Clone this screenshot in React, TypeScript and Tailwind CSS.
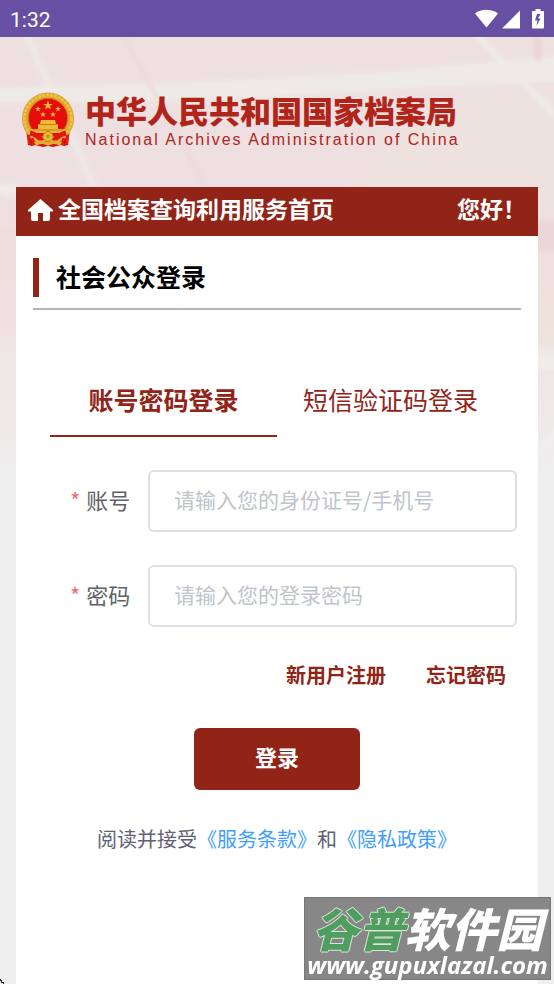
import { useState } from "react";

const tabs = ["账号密码登录", "短信验证码登录"];

const fields = [
  { id: "account", label: "账号", type: "text", placeholder: "请输入您的身份证号/手机号" },
  { id: "password", label: "密码", type: "password", placeholder: "请输入您的登录密码" },
];

function StatusBar() {
  return (
    <div className="flex h-[37px] items-center justify-between bg-[#674fa3] px-[10px] text-white">
      <span className="pt-[2px] font-[Roboto,sans-serif] text-[21px] leading-8">1:32</span>
      <svg width="70" height="20" viewBox="0 0 70 20" fill="currentColor" aria-hidden="true">
        <path d="M1 4.500C7 -.5 17.500 -.5 24 4.500L12.500 18.500Z" />
        <path d="M46 1.500V19.500H28Z" />
        <path
          fillRule="evenodd"
          d="M61.500 0h5v2h2.500a1 1 0 0 1 1 1v15.500a1 1 0 0 1-1 1H59a1 1 0 0 1-1-1V3a1 1 0 0 1 1-1h2.500zM63 5l-2 6.500h2.500L62.500 17l4-7.500H64l2.500-4.500z"
        />
      </svg>
    </div>
  );
}

/* Faded marble-like artwork behind the header */
function Backdrop() {
  return (
    <svg
      className="absolute inset-x-0 top-0 h-[480px] w-full"
      viewBox="0 0 554 480"
      preserveAspectRatio="none"
      aria-hidden="true"
    >
      <defs>
        <linearGradient id="fade" x1="0" y1="0" x2="0" y2="1">
          <stop offset="0.5" stopColor="#efefef" stopOpacity="0" />
          <stop offset="0.95" stopColor="#efefef" />
        </linearGradient>
        <filter id="soft" x="-10%" y="-10%" width="120%" height="120%">
          <feGaussianBlur stdDeviation="2" />
        </filter>
      </defs>
      <rect width="554" height="480" fill="#eee0e1" />
      <g filter="url(#soft)">
        <path d="M440 66L564 50V160L330 170Z" fill="#eee2de" />
        <path d="M-10 51L180 46L380 35L564 18V44L400 52L200 64L-10 66Z" fill="#eeebe6" />
        <path d="M26 -4L94 150" stroke="#efe9e7" strokeWidth="6" />
        <path d="M122 -4L206 150" stroke="#ebdada" strokeWidth="4" />
        <path d="M472 -6L564 86" stroke="#f0ebe8" strokeWidth="6" />
        <path d="M538 -4V24" stroke="#ead5d5" strokeWidth="7" />
        <path d="M-4 144L20 150V162L-4 156Z" fill="#f0eae8" />
        <path d="M-4 190H20V300H-4Z" fill="#f0dedd" />
        <path d="M536 184H560V214H536Z" fill="#ecd6d7" />
        <path d="M536 250H560V310H536Z" fill="#eedfd8" />
        <path d="M536 315H560V332H536Z" fill="#efebe5" />
        <path d="M536 337H560V365H536Z" fill="#efdddd" />
        <path d="M534 420L560 390" stroke="#f0eeee" strokeWidth="5" />
      </g>
      <rect width="554" height="480" fill="url(#fade)" />
    </svg>
  );
}

function Emblem() {
  const star = "M0-5L1.200-1.600H4.800L1.900.6L3 4L0 1.900L-3 4L-1.900.6L-4.800-1.600H-1.200Z";
  return (
    <svg width="54" height="56" viewBox="0 0 54 56" className="shrink-0" role="img" aria-label="国徽">
      <path d="M5 37L7 53l4 1 3-1 4 1 4 1 5-1 5 1 4-1 4-1 3 1 4-1L49 37Z" fill="#d3110e" />
      <circle cx="27" cy="26.500" r="26" fill="#dca42a" />
      <circle cx="27" cy="26.500" r="23.500" fill="none" stroke="#edc148" strokeWidth="3" strokeDasharray="3 1" />
      <circle cx="27" cy="26" r="19.500" fill="#e60c0b" stroke="#b77a12" strokeWidth="0.500" />
      <g fill="#f0b937">
        <path d={star} transform="translate(27 13.500)" />
        <path d={star} transform="translate(17 17) scale(.62)" />
        <path d={star} transform="translate(37 17) scale(.62)" />
        <path d={star} transform="translate(22 22.500) scale(.62)" />
        <path d={star} transform="translate(32 22.500) scale(.62)" />
        <path d="M20 28H34L35 32H37V37H45L42 41H12L9 37H17V32H19Z" />
      </g>
      <path d="M18 32.500H36M12 38H42" stroke="#c77c16" strokeWidth="1" />
      <path d="M9 41Q17 43 21 49M45 41Q37 43 33 49" stroke="#e11612" strokeWidth="5" fill="none" />
      <circle cx="27" cy="44.500" r="5" fill="#edbd3b" stroke="#b77a12" strokeWidth="1" />
      <circle cx="27" cy="44.500" r="2" fill="#cf921e" />
      <path d="M13 50Q20 46 27 51Q34 46 41 50L39 54Q33 50 27 54Q21 50 15 54Z" fill="#e2ae31" />
      <path d="M8 43V52M12 46V53M42 46V53M46 43V52" stroke="#e51b16" strokeWidth="2" />
    </svg>
  );
}

function Watermark() {
  return (
    <div className="fixed right-[3px] bottom-1 flex h-[83px] w-[247px] flex-col items-center border border-[#777] bg-[#878787] whitespace-nowrap text-white">
      <div className="pt-1 text-[46px] leading-[50px] font-black italic">
        <span className="text-[#4f9e60] [text-shadow:1px_0_#d8e5d8,-1px_0_#d8e5d8,0_1px_#d8e5d8,0_-1px_#d8e5d8]">
          谷普
        </span>
        软件园
      </div>
      <div className="font-['Open_Sans',sans-serif] text-[24px] leading-[26px] font-bold italic">
        www.gupuxlazal.com
      </div>
    </div>
  );
}

export default function App() {
  const [activeTab, setActiveTab] = useState(0);

  return (
    <div className="flex min-h-screen flex-col bg-[#efefef] font-['Noto_Sans_CJK_SC',sans-serif]">
      <StatusBar />

      <div className="relative flex flex-1 flex-col">
        <Backdrop />

        {/* ===== HEADER ===== */}
        <header className="relative flex h-[150px] items-center gap-[10px] pt-4 pl-[21px]">
          <Emblem />
          <div className="whitespace-nowrap text-[#b12419]">
            <h1 className="text-[31px] leading-10 font-black">中华人民共和国国家档案局</h1>
            <p className="font-['Liberation_Sans',sans-serif] text-base leading-5 tracking-[2px]">
              National Archives Administration of China
            </p>
          </div>
        </header>

        <main className="relative mx-4 flex flex-1 flex-col bg-white">
          <nav className="flex h-[49px] items-center justify-between bg-[#912417] pr-3 pb-2 pl-3 text-[23px] leading-8 font-bold text-white">
            <a href="#home" className="flex items-center gap-[5px]">
              <svg width="25" height="22" viewBox="0 0 25 22" fill="currentColor" className="mt-1" aria-hidden="true">
                <path d="M12.500 0L25 11V12.500H22V20Q22 22 20 22H15V14H10V22H5Q3 22 3 20V12.500H0V11Z" />
              </svg>
              全国档案查询利用服务首页
            </a>
            <span>您好！</span>
          </nav>

          {/* ===== TITLE ===== */}
          <div className="mx-[17px] flex border-b-2 border-[#b5b5b5] pt-[22px] pb-[11px]">
            <h2 className="border-l-6 border-[#912417] pb-[3px] pl-[17px] text-[25px] leading-9 font-bold text-black">
              社会公众登录
            </h2>
          </div>

          {/* ===== TABS ===== */}
          <div role="tablist" className="mx-[34px] mt-[56px] grid grid-cols-2">
            {tabs.map((tab, index) => (
              <button
                key={tab}
                type="button"
                role="tab"
                aria-selected={activeTab === index}
                onClick={() => setActiveTab(index)}
                className={`h-[71px] border-b-2 pb-[3px] text-[25px] leading-9 whitespace-nowrap text-[#912417] ${
                  activeTab === index ? "border-[#912417] font-bold" : "border-transparent"
                }`}
              >
                {tab}
              </button>
            ))}
          </div>

          {/* ===== FORM ===== */}
          <form className="flex flex-col" onSubmit={(e) => e.preventDefault()}>
            <div className="mt-[33px] mr-[21px] ml-[54px] flex flex-col gap-[33px]">
              {fields.map((field) => (
                <div key={field.id} className="flex items-center">
                  <label htmlFor={field.id} className="w-[78px] shrink-0 pb-[5px] text-[22px] leading-8 text-[#606266]">
                    <span className="mr-[6px] text-[#f56c6c]">*</span>
                    {field.label}
                  </label>
                  <input
                    id={field.id}
                    type={field.type}
                    placeholder={field.placeholder}
                    className="h-[62px] min-w-0 flex-1 rounded-md border-2 border-[#dcdfe6] bg-white px-6 pb-[5px] text-[21px] text-[#606266] placeholder:text-[#c0c4cc]"
                  />
                </div>
              ))}
            </div>

            <div className="mt-8 mr-8 flex justify-end gap-10 text-[20px] leading-8 font-bold text-[#912417]">
              <a href="#register">新用户注册</a>
              <a href="#forgot">忘记密码</a>
            </div>

            <div className="mt-[37px] flex flex-col items-center">
              <button
                type="submit"
                className="h-[62px] w-[166px] rounded-md bg-[#912417] pb-[5px] text-[22px] font-bold text-white"
              >
                登录
              </button>
              <p className="mt-[33px] text-[20px] leading-8 text-[#606276]">
                阅读并接受
                <a href="#terms" className="text-[#409eff]">《服务条款》</a>
                和
                <a href="#privacy" className="text-[#409eff]">《隐私政策》</a>
              </p>
            </div>
          </form>
        </main>
      </div>

      <svg className="fixed bottom-0 left-0" width="4" height="5" viewBox="0 0 4 5" aria-hidden="true">
        <path d="M0 0H1V1H2V3H4V5H3V4H1V2H0Z" fill="#222" />
      </svg>
      <Watermark />
    </div>
  );
}
